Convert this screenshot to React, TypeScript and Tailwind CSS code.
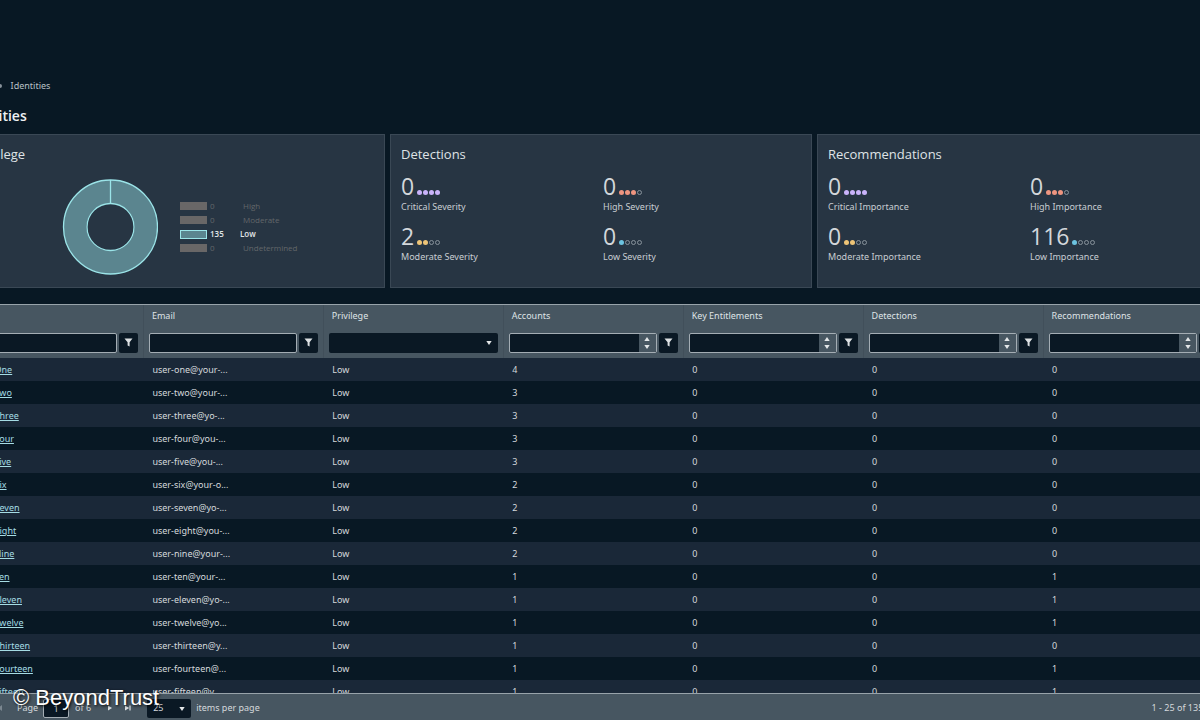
import {useState} from "react";
import clsx from "clsx";

type Identity = {
    name: string;
    email: string;
    accounts: number;
    recommendations: number;
};

type Stat = {
    value: number;
    label: string;
    level: "critical" | "high" | "moderate" | "low";
};

const identities: Identity[] = [
    {name: "One", email: "user-one@your-...", accounts: 4, recommendations: 0},
    {name: "Two", email: "user-two@your-...", accounts: 3, recommendations: 0},
    {name: "Three", email: "user-three@yo-...", accounts: 3, recommendations: 0},
    {name: "Four", email: "user-four@you-...", accounts: 3, recommendations: 0},
    {name: "Five", email: "user-five@you-...", accounts: 3, recommendations: 0},
    {name: "Six", email: "user-six@your-o...", accounts: 2, recommendations: 0},
    {name: "Seven", email: "user-seven@yo-...", accounts: 2, recommendations: 0},
    {name: "Eight", email: "user-eight@you-...", accounts: 2, recommendations: 0},
    {name: "Nine", email: "user-nine@your-...", accounts: 2, recommendations: 0},
    {name: "Ten", email: "user-ten@your-...", accounts: 1, recommendations: 1},
    {name: "Eleven", email: "user-eleven@yo-...", accounts: 1, recommendations: 1},
    {name: "Twelve", email: "user-twelve@yo...", accounts: 1, recommendations: 1},
    {name: "Thirteen", email: "user-thirteen@y...", accounts: 1, recommendations: 0},
    {name: "Fourteen", email: "user-fourteen@...", accounts: 1, recommendations: 1},
    {name: "Fifteen", email: "user-fifteen@y...", accounts: 1, recommendations: 1},
];

const detections: Stat[] = [
    {value: 0, label: "Critical Severity", level: "critical"},
    {value: 0, label: "High Severity", level: "high"},
    {value: 2, label: "Moderate Severity", level: "moderate"},
    {value: 0, label: "Low Severity", level: "low"},
];

const recommendations: Stat[] = [
    {value: 0, label: "Critical Importance", level: "critical"},
    {value: 0, label: "High Importance", level: "high"},
    {value: 0, label: "Moderate Importance", level: "moderate"},
    {value: 116, label: "Low Importance", level: "low"},
];

const privileges = [
    {label: "High", value: 0},
    {label: "Moderate", value: 0},
    {label: "Low", value: 135},
    {label: "Undetermined", value: 0},
];

const levels = {
    critical: {filled: 4, color: "bg-[#c9b3fa]"},
    high: {filled: 3, color: "bg-[#ee9580]"},
    moderate: {filled: 2, color: "bg-[#edc477]"},
    low: {filled: 1, color: "bg-[#6cc3e0]"},
};

const columns: {title: string; filter: "text" | "select" | "number"}[] = [
    {title: "Name", filter: "text"},
    {title: "Email", filter: "text"},
    {title: "Privilege", filter: "select"},
    {title: "Accounts", filter: "number"},
    {title: "Key Entitlements", filter: "number"},
    {title: "Detections", filter: "number"},
    {title: "Recommendations", filter: "number"},
];

function Card({title, children}: {title: string; children: React.ReactNode}) {
    return (
        <section className="min-w-0 flex-1 border border-[#3a4855] bg-[#273543] pb-2.5 pl-2.5 pr-1.5 pt-[9px]">
            <h2 className="font-['Open_Sans',sans-serif] text-[13px] leading-5 text-[#dfe3e6]">{title}</h2>
            {children}
        </section>
    );
}

function StatGrid({stats}: {stats: Stat[]}) {
    return (
        <div className="mt-[9px] grid grid-cols-2 gap-y-2.5">
            {stats.map((stat) => (
                <div key={stat.label}>
                    <div className="flex h-[27px] items-end gap-[3px]">
                        <span className="font-['Open_Sans',sans-serif] text-[23px] leading-[27px] text-[#d3d7db]">{stat.value}</span>
                        <span className="flex gap-px pb-[5px]">
                            {[0, 1, 2, 3].map((i) => (
                                <i
                                    key={i}
                                    className={clsx(
                                        "size-[5px] rounded-full",
                                        i < levels[stat.level].filled ? levels[stat.level].color : "border border-[#87929b]"
                                    )}
                                />
                            ))}
                        </span>
                    </div>
                    <p className="leading-[13px] text-[#c8cdd2]">{stat.label}</p>
                </div>
            ))}
        </div>
    );
}

function PrivilegeChart() {
    return (
        <div className="flex items-center pl-[88px] pt-[15px]">
            <svg className="size-24 shrink-0" viewBox="0 0 96 96" fill="none" stroke="#9be4e8">
                <circle cx="48.5" cy="48" r="35.5" stroke="#5b858f" strokeWidth="23"/>
                <circle cx="48.5" cy="48" r="47" strokeWidth="1.3"/>
                <circle cx="48.5" cy="48" r="23.5" strokeWidth="1.3"/>
                <path d="M48.5 1v23.5" strokeWidth="1.3"/>
            </svg>
            <ul className="ml-[22px] font-['Open_Sans',sans-serif] text-[8px] leading-[14px] text-[#63676a]">
                {privileges.map(({label, value}) => (
                    <li key={label} className={clsx("flex items-center gap-[3px]", value > 0 && "font-semibold text-[#e3e7e9]")}>
                        <span className={clsx("w-[27px]", value > 0 ? "h-[9px] border border-[#9be4e8] bg-[#5b858f]" : "h-2 bg-[#696767]")}/>
                        <span className={value > 0 ? "w-[27px]" : "w-[30px]"}>{value}</span>
                        <span>{label}</span>
                    </li>
                ))}
            </ul>
        </div>
    );
}

function FilterButton({title}: {title: string}) {
    return (
        <button type="button" aria-label={`Filter ${title}`} className="grid h-5 w-[19px] shrink-0 place-items-center rounded-xs bg-[#0a1824]">
            <svg className="size-[9px]" viewBox="0 0 9 9" fill="#dde1e3">
                <path d="M.5 .5h8L5.6 4.2V8.6L3.6 7.6V4.2z"/>
            </svg>
        </button>
    );
}

function ColumnFilter({title, filter}: {title: string; filter: "text" | "select" | "number"}) {
    if (filter === "select") {
        return (
            <div className="relative flex">
                <select aria-label={title} className="h-5 w-full appearance-none rounded-xs bg-[#0a1824]">
                    <option value=""></option>
                    <option>High</option>
                    <option>Low</option>
                </select>
                <Caret className="pointer-events-none absolute right-1.5 top-2"/>
            </div>
        );
    }

    return (
        <div className="flex gap-0.5">
            <div className="flex h-5 min-w-0 flex-1 overflow-hidden rounded-xs border border-[#a4adb4] bg-[#0a1824]">
                <input type="text" aria-label={title} className="min-w-0 flex-1 px-1 outline-none"/>
                {filter === "number" && (
                    <div className="flex w-[17px] flex-col items-center justify-between bg-[#475661] py-[3px]">
                        <button type="button" aria-label={`Increase ${title}`}><Caret className="rotate-180"/></button>
                        <button type="button" aria-label={`Decrease ${title}`}><Caret/></button>
                    </div>
                )}
            </div>
            <FilterButton title={title}/>
        </div>
    );
}

function Caret({className}: {className?: string}) {
    return (
        <svg className={clsx("block h-1 w-1.5", className)} viewBox="0 0 6 4" fill="#e3e6e8">
            <path d="M.3 0h5.4L3 4z"/>
        </svg>
    );
}

function IdentityTable() {
    return (
        <div className="min-h-0 flex-1 overflow-hidden bg-[#475661] pr-4">
            <table className="w-full table-fixed border-collapse text-left">
                <thead className="bg-[#475661]">
                    <tr>
                        {columns.map(({title}) => (
                            <th key={title} className="h-[22px] border-l border-[#414f5a] p-0 pl-2 font-normal text-[#dfe3e6]">{title}</th>
                        ))}
                    </tr>
                    <tr>
                        {columns.map((column) => (
                            <td key={column.title} className="h-[31px] border-l border-[#414f5a] p-0 px-[5px]">
                                <ColumnFilter {...column}/>
                            </td>
                        ))}
                    </tr>
                </thead>
                <tbody>
                    {identities.map((identity) => (
                        <tr key={identity.name} className="h-[23px] odd:bg-[#1a2838] even:bg-[#081824] *:p-0 *:pl-[9px]">
                            <td><a href="#" className="text-[#a5dce4] underline">User {identity.name}</a></td>
                            <td>{identity.email}</td>
                            <td>Low</td>
                            <td>{identity.accounts}</td>
                            <td>0</td>
                            <td>0</td>
                            <td>{identity.recommendations}</td>
                        </tr>
                    ))}
                </tbody>
            </table>
        </div>
    );
}

function Pager() {
    const [page, setPage] = useState("1");

    return (
        <div className="flex h-[27px] shrink-0 items-center border-t border-[#98a3aa] bg-[#475661] pl-[34px] pr-2.5 pt-0.5">
            <button type="button" aria-label="Previous page">
                <svg className="h-2 w-1.5" viewBox="0 0 6 8" fill="#7b8790"><path d="M5 1v6L1 4z"/></svg>
            </button>
            <label htmlFor="page" className="ml-[14px]">Page</label>
            <input
                id="page"
                value={page}
                onChange={(e) => setPage(e.target.value)}
                className="ml-[5px] h-[19px] w-[26px] rounded-xs border border-[#a4adb4] bg-[#0a1824] text-center"
            />
            <span className="ml-1.5">of 6</span>
            <button type="button" aria-label="Next page" className="ml-4">
                <svg className="h-2 w-1.5" viewBox="0 0 6 8" fill="#dde1e3"><path d="M1 1.5v5L5 4z"/></svg>
            </button>
            <button type="button" aria-label="Last page" className="ml-3">
                <svg className="h-2 w-1.5" viewBox="0 0 6 8" fill="#dde1e3"><path d="M0 1.5v5L4.2 4zM4.4 1.5h1.2v5H4.4z"/></svg>
            </button>
            <div className="relative ml-4">
                <select id="page-size" defaultValue="25" className="h-[19px] w-11 appearance-none rounded-xs bg-[#0a1824] pl-1.5">
                    <option>25</option>
                    <option>50</option>
                </select>
                <Caret className="pointer-events-none absolute right-1.5 top-2"/>
            </div>
            <label htmlFor="page-size" className="ml-[5px]">items per page</label>
            <span className="ml-auto">1 - 25 of 135 items</span>
        </div>
    );
}

export default function App() {
    return (
        <div className="relative h-screen overflow-hidden bg-[#081824] font-['Noto_Sans',sans-serif] text-[9px] leading-3 text-[#d5d9dc]">
            <main className="-ml-[37px] -mr-[39px] flex h-full flex-col pt-20">
                <nav className="flex h-3 items-center gap-[9px] text-[#b9c1c7]">
                    <a href="#">Home</a>
                    <i className="size-1 rounded-full bg-[#87929b]"/>
                    <span>Identities</span>
                </nav>
                <h1 className="mt-3 font-['Open_Sans',sans-serif] text-[14px] font-semibold leading-6 text-[#eef0f2]">Identities</h1>
                <div className="mt-1.5 flex h-[154px] gap-[5px]">
                    <Card title="Privilege"><PrivilegeChart/></Card>
                    <Card title="Detections"><StatGrid stats={detections}/></Card>
                    <Card title="Recommendations"><StatGrid stats={recommendations}/></Card>
                </div>
                <div className="mt-4 flex min-h-0 flex-1 flex-col border-t border-[#98a3aa]">
                    <IdentityTable/>
                    <Pager/>
                </div>
            </main>
            <p className="absolute bottom-2 left-[13px] font-['Liberation_Sans',sans-serif] text-[22px] leading-7 text-white [text-shadow:1px_1px_3px_#000]">
                © BeyondTrust
            </p>
        </div>
    );
}
